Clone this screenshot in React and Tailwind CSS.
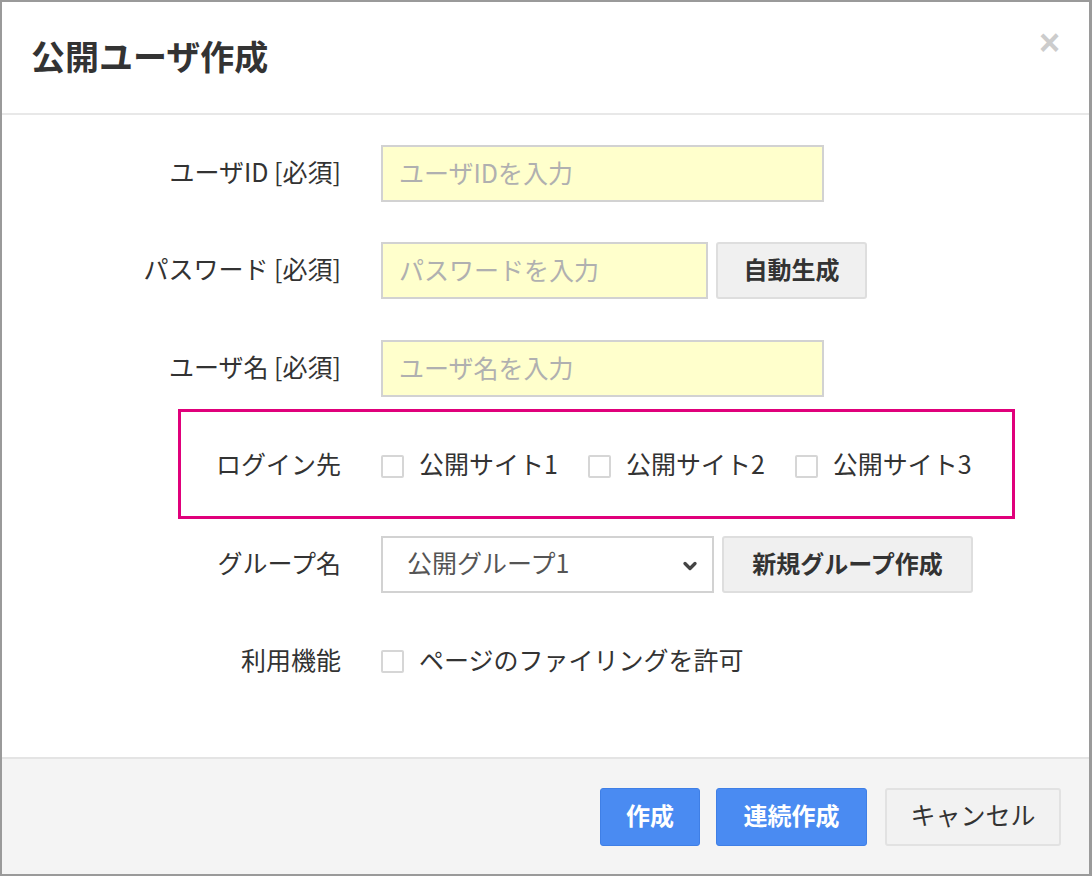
import { ChevronDown } from "lucide-react";

function Label({ children, className = "" }) {
  return (
    <div className={`shrink-0 text-right text-[25px] text-[#333] pb-[4px] ${className}`}>{children}</div>
  );
}

function Check({ label }) {
  return (
    <label className="flex items-center">
      <span className="w-[23px] h-[23px] border-2 border-[#d6d6d6] bg-white rounded-[2px]"></span>
      <span className="ml-[15px] text-[25px] text-[#333] pb-[4px]">{label}</span>
    </label>
  );
}

export default function App() {
  return (
    <div
      className="w-[1092px] h-[876px] bg-white border-2 border-[#9a9a9a] border-r-[3px] flex flex-col"
      style={{ fontFamily: '"Noto Sans CJK JP", "Liberation Sans", sans-serif' }}
    >
      {/* header */}
      <div className="relative h-[113px] shrink-0 border-b-2 border-[#e8e8e8] flex items-center pl-[29px]">
        <h1 className="text-[34px] font-bold text-[#333] leading-none -mt-[4px]">公開ユーザ作成</h1>
        <span
          className="absolute right-[29px] top-[23px] text-[36px] font-bold text-[#cccccc] leading-none"
          style={{ fontFamily: '"Liberation Sans", sans-serif' }}
        >
          ×
        </span>
      </div>

      {/* body */}
      <div className="flex-1 flex flex-col pt-[30px]">
        <div className="flex items-center h-[57px]">
          <Label className="w-[339px]">ユーザID [必須]</Label>
          <input
            className="ml-[40px] w-[443px] h-[57px] border-2 border-[#d2d2d2] bg-[#ffffcc] px-[16px] pb-[3px] text-[25px] placeholder:text-[#b0b0b0] outline-none"
            placeholder="ユーザIDを入力"
          />
        </div>

        <div className="flex items-center h-[57px] mt-[40px]">
          <Label className="w-[339px]">パスワード [必須]</Label>
          <input
            className="ml-[40px] w-[327px] h-[57px] border-2 border-[#d2d2d2] bg-[#ffffcc] px-[16px] pb-[3px] text-[25px] placeholder:text-[#b0b0b0] outline-none"
            placeholder="パスワードを入力"
          />
          <button className="ml-[8px] w-[151px] h-[57px] rounded-[3px] border-2 border-[#dedede] bg-[#f0f0f0] text-[24px] font-bold text-[#333] pb-[3px]">
            自動生成
          </button>
        </div>

        <div className="flex items-center h-[57px] mt-[41px]">
          <Label className="w-[339px]">ユーザ名 [必須]</Label>
          <input
            className="ml-[40px] w-[443px] h-[57px] border-2 border-[#d2d2d2] bg-[#ffffcc] px-[16px] pb-[3px] text-[25px] placeholder:text-[#b0b0b0] outline-none"
            placeholder="ユーザ名を入力"
          />
        </div>

        {/* highlighted row */}
        <div className="ml-[176px] mt-[12px] w-[837px] h-[110px] border-[3px] border-[#e0007b] flex items-center pt-[4px]">
          <Label className="w-[160px]">ログイン先</Label>
          <div className="ml-[40px] flex items-center gap-[30px]">
            <Check label="公開サイト1" />
            <Check label="公開サイト2" />
            <Check label="公開サイト3" />
          </div>
        </div>

        <div className="flex items-center h-[57px] mt-[17px]">
          <Label className="w-[339px]">グループ名</Label>
          <div className="relative ml-[40px] w-[333px] h-[57px] border-2 border-[#d2d2d2] bg-white flex items-center pl-[24px] pb-[3px] text-[25px] text-[#555]">
            公開グループ1
            <ChevronDown className="absolute right-[12px] top-[18px] w-[20px] h-[20px] text-[#444]" strokeWidth={4} />
          </div>
          <button className="ml-[8px] w-[251px] h-[57px] rounded-[3px] border-2 border-[#dedede] bg-[#f0f0f0] text-[24px] font-bold text-[#333] pb-[3px]">
            新規グループ作成
          </button>
        </div>

        <div className="flex items-center h-[57px] mt-[40px]">
          <Label className="w-[339px]">利用機能</Label>
          <div className="ml-[40px]">
            <Check label="ページのファイリングを許可" />
          </div>
        </div>
      </div>

      {/* footer */}
      <div className="h-[117px] shrink-0 border-t-2 border-[#e4e4e4] bg-[#f4f4f4] flex items-center justify-end pr-[28px] gap-[16px]">
        <button className="w-[100px] h-[58px] rounded-[3px] border border-[#3f7fe6] bg-[#4a8bf2] text-white text-[24px] font-bold pb-[3px]">
          作成
        </button>
        <button className="w-[151px] h-[58px] rounded-[3px] border border-[#3f7fe6] bg-[#4a8bf2] text-white text-[24px] font-bold pb-[3px]">
          連続作成
        </button>
        <button className="ml-[2px] w-[176px] h-[58px] rounded-[3px] border-2 border-[#e2e2e2] bg-[#f2f2f2] text-[#333] text-[25px] pb-[3px]">
          キャンセル
        </button>
      </div>
    </div>
  );
}
